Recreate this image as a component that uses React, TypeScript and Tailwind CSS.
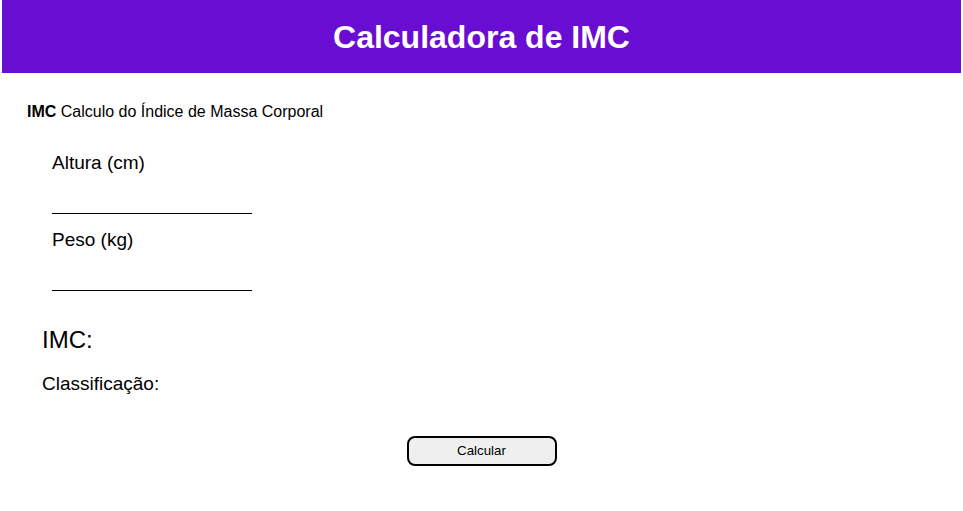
export default function App() {
  return (
    <div className="min-h-screen bg-white font-['Liberation_Sans',Arial,sans-serif] text-black">
      {/* Header */}
      <header className="mx-[2px] flex h-[73px] items-center justify-center bg-[#6a0dd2]">
        <h1 className="text-[32px] font-bold text-white">Calculadora de IMC</h1>
      </header>

      <main className="px-[27px] pt-[30px]">
        <p className="text-[16px] leading-[18px]">
          <b>IMC</b> Calculo do Índice de Massa Corporal
        </p>

        <div className="ml-[25px] mt-[31px] flex flex-col">
          <label className="text-[19px] leading-[22px]">Altura (cm)</label>
          <input
            type="text"
            className="mt-[38px] h-[2px] w-[200px] border-b border-black outline-none"
          />
          <label className="mt-[15px] text-[19px] leading-[22px]">Peso (kg)</label>
          <input
            type="text"
            className="mt-[38px] h-[2px] w-[200px] border-b border-black outline-none"
          />
        </div>

        <div className="ml-[15px] mt-[35px]">
          <h2 className="text-[24px] leading-[28px]">IMC:</h2>
          <p className="mt-[19px] text-[19px] leading-[22px]">Classificação:</p>
        </div>

        <div className="mt-[41px] flex justify-center">
          <button className="h-[30px] w-[150px] rounded-[8px] border-2 border-black bg-[#efefef] text-[13.33px]">
            Calcular
          </button>
        </div>
      </main>
    </div>
  );
}
